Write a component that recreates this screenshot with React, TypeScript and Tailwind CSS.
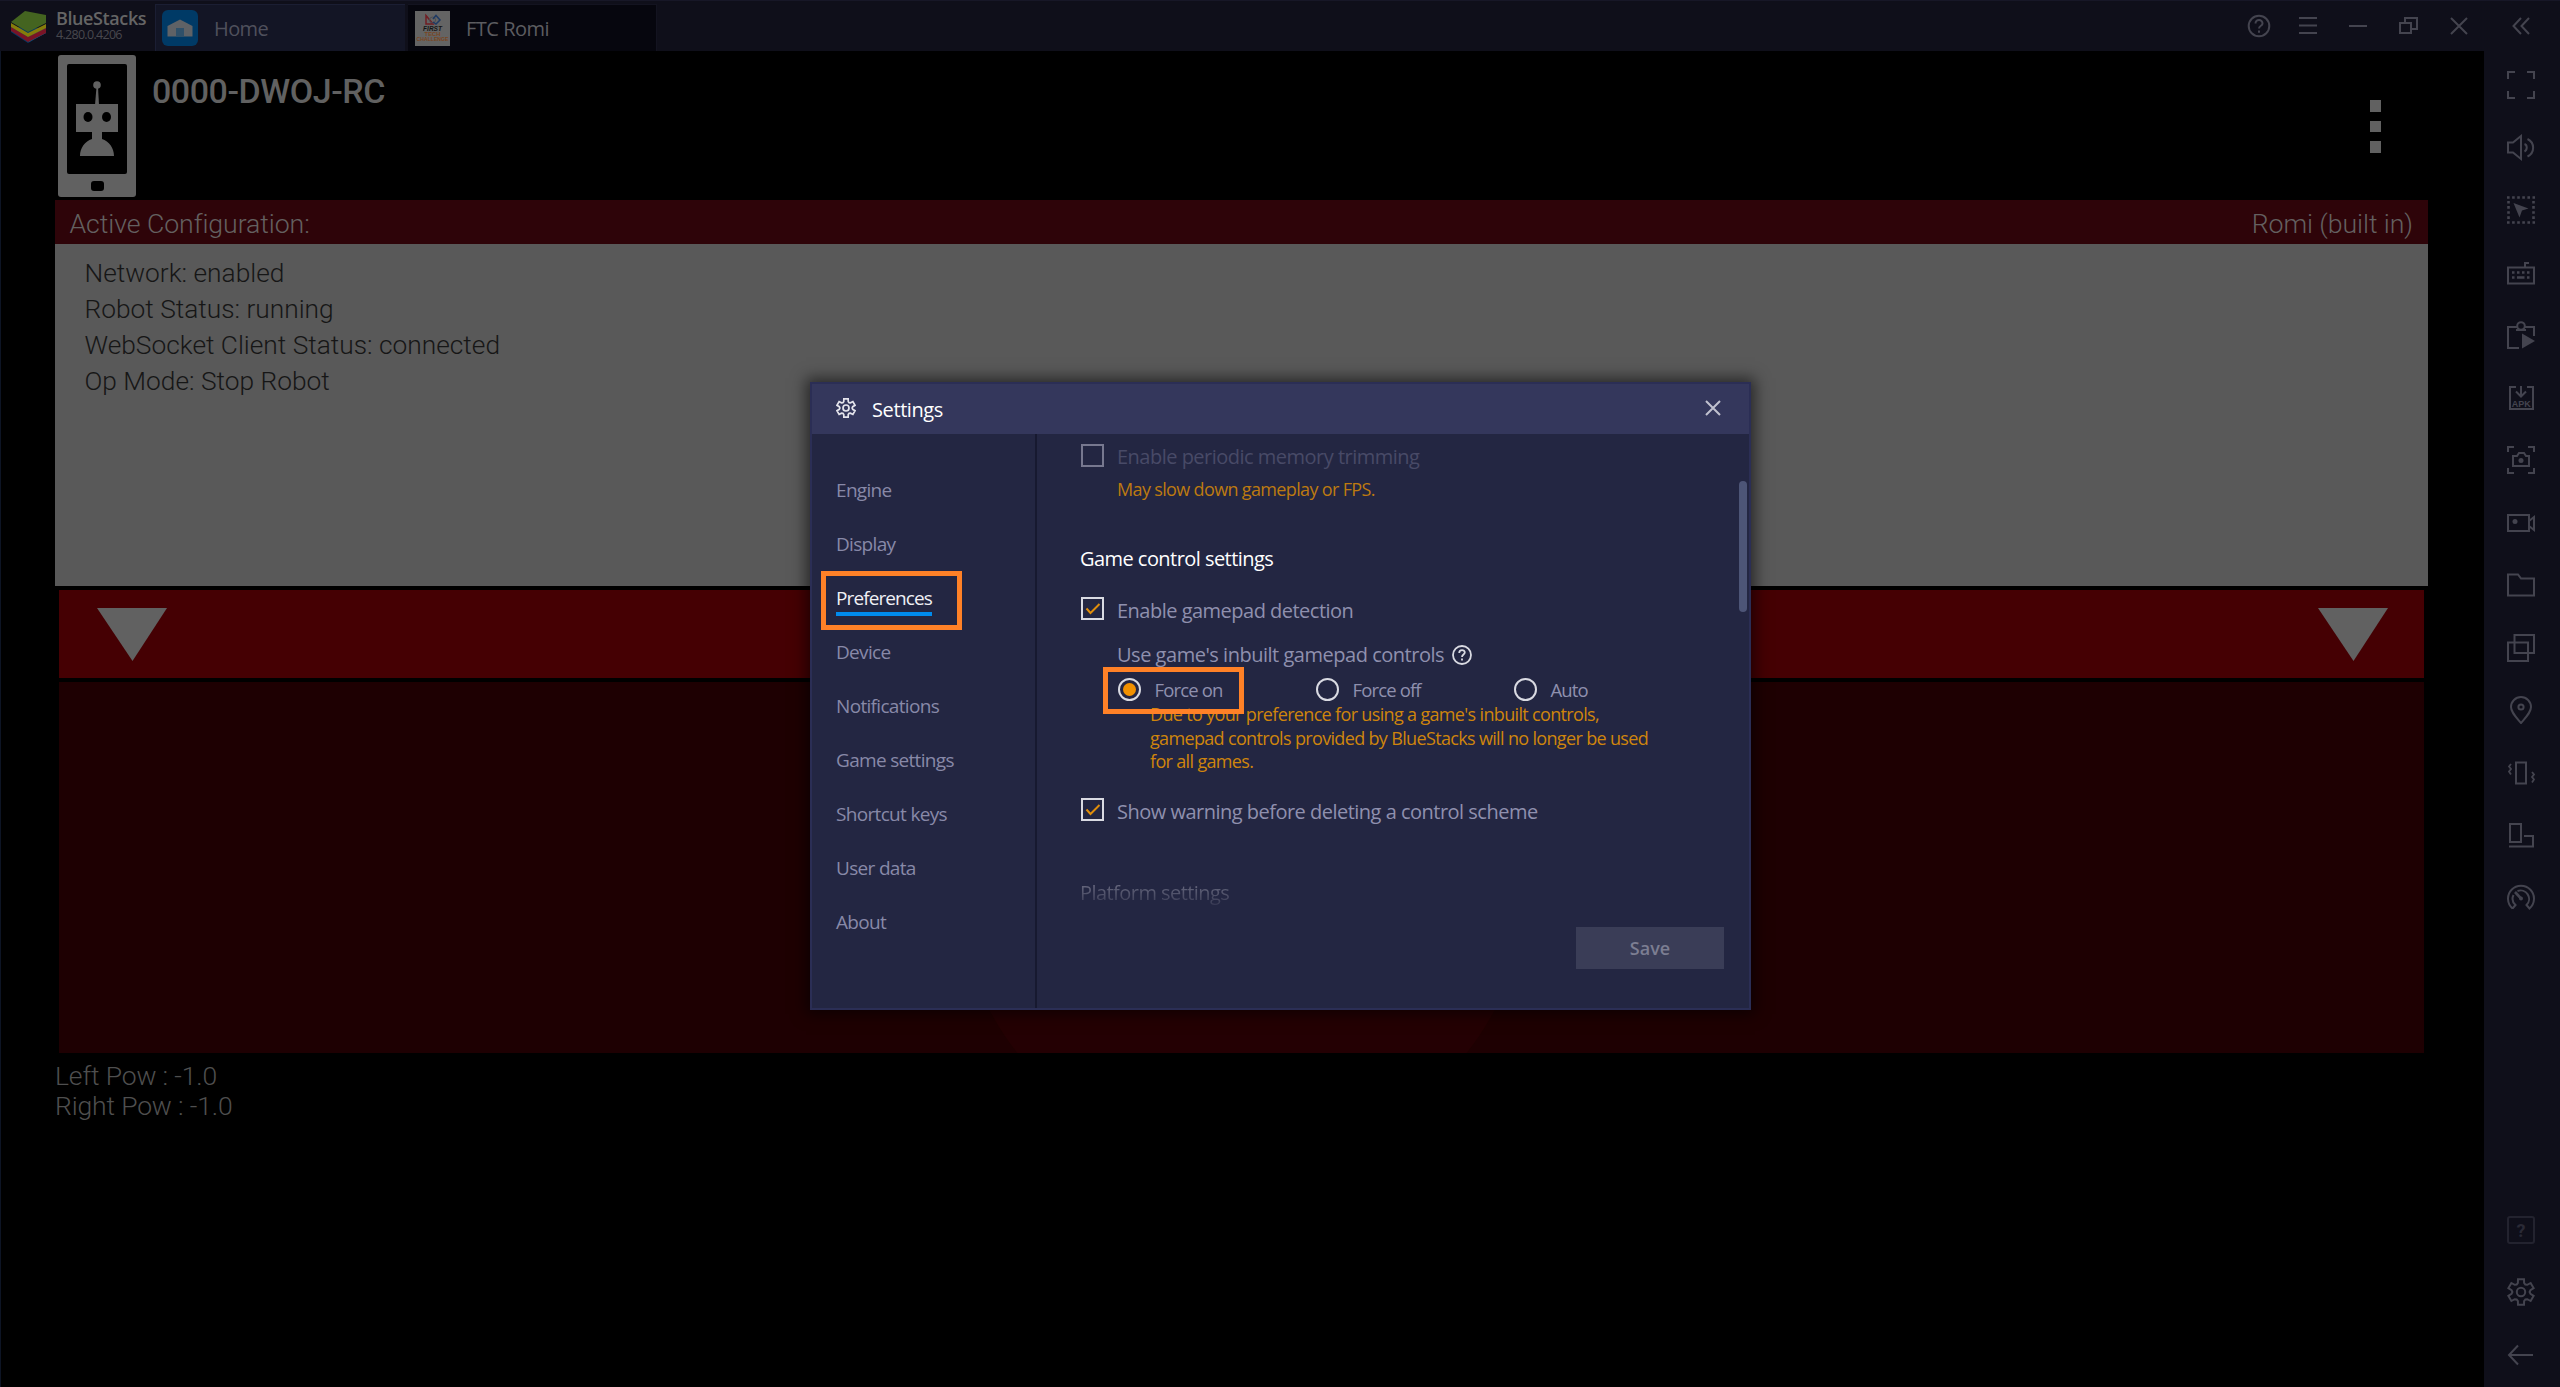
import React from "react";

const UI = "font-['Open_Sans','Noto_Sans',sans-serif]";

function Svg({ w, h, vw, vh, children, className = "" }: { w: number; h: number; vw?: number; vh?: number; children: React.ReactNode; className?: string }) {
  return (
    <svg width={w} height={h} viewBox={`0 0 ${vw ?? w} ${vh ?? h}`} fill="none" stroke="currentColor" strokeWidth={2} className={"block shrink-0 " + className}>
      {children}
    </svg>
  );
}

function Gear({ s, sw = 2 }: { s: number; sw?: number }) {
  const pts: string[] = [];
  for (let i = 0; i < 6; i++) {
    const a = (i * Math.PI) / 3 - Math.PI / 2;
    const p = (r: number, d: number) => `${(14 + r * Math.cos(a + d)).toFixed(2)} ${(14 + r * Math.sin(a + d)).toFixed(2)}`;
    pts.push(p(9.6, -0.33), p(13.2, -0.23), p(13.2, 0.23), p(9.6, 0.33), p(8.6, Math.PI / 6));
  }
  return (
    <Svg w={s} h={s} vw={28} vh={28}>
      <path d={"M" + pts.join("L") + "Z"} strokeWidth={sw} />
      <circle cx="14" cy="14" r="4.2" strokeWidth={sw} />
    </Svg>
  );
}

const sideIcons: React.ReactNode[] = [
  <path d="M1 8V1h7M20 1h7v7M27 20v7h-7M8 27H1v-7" />,
  <>
    <path d="M1 8.500h5L14 2v23l-8-6.500H1z" />
    <path d="M17.500 10c3 1 3 6 0 7.500M20.500 5c7.500 3.500 7.500 14 0 17.500" />
  </>,
  <>
    <path d="M0 1.500h28M0 26.500h28M1.500 5v18M26.500 5v18" strokeWidth="2.600" strokeDasharray="2.600 2.500" />
    <path d="M6.500 7l15 5.500-6.500 2-2.500 7z" fill="currentColor" stroke="none" />
  </>,
  <>
    <path d="M1 8.500h26v16H1zM18 8V4h4" />
    <path d="M5 13.500h2.500m2.500 0h2.500m2.500 0h2.500m2.500 0h2.500M5 18.500h2.500m2.500 0h7.500m2.500 0h2.500" strokeWidth="2.500" />
  </>,
  <>
    <path d="M12 27H1V6h9M18 6h9v9" />
    <circle cx="14" cy="5" r="3.800" />
    <path d="M9 9h10" />
    <path d="M15 12.500l13 7.500-13 7.500z" fill="currentColor" stroke="none" />
  </>,
  <>
    <path d="M9 3H3v22h23V3h-6M14 2v10M9 7.500l5 5 5-5" />
    <text x="14.300" y="22.500" textAnchor="middle" fontSize="9" fontWeight="700" fill="currentColor" stroke="none" fontFamily="Liberation Sans, sans-serif">APK</text>
  </>,
  <>
    <path d="M1 6V1h6M21 1h6v5M27 22v5h-6M7 27H1v-5" />
    <path d="M6 10h4l2-3h5l2 3h3v10H6z" />
    <circle cx="14" cy="14.500" r="2.500" fill="currentColor" stroke="none" />
  </>,
  <>
    <path d="M1 6h21v16H1zM22 12l5-4v13l-5-4" />
    <circle cx="8" cy="12.500" r="2.500" fill="currentColor" stroke="none" />
  </>,
  <path d="M1 3.500h10l3 4h13v17H1z" />,
  <path d="M7.500 1H27v18H7.500zM1 8.500h20V27H1z" />,
  <>
    <path d="M14 27C8 20 4 16 4 11a10 10 0 0 1 20 0c0 5-4 9-10 16z" />
    <circle cx="14" cy="11" r="2.600" />
  </>,
  <>
    <path d="M9 3.500h10v21H9z" />
    <path d="M4 5L2 7.500l2 2.500-2 2.500 2 3M25 13l2 2.500-2 2.500 2 2.500-2 3" strokeWidth="1.800" />
  </>,
  <path d="M3 3h11v18H3zM2 25.500h24V15h-9" />,
  <>
    <path d="M5.500 24.500a13 13 0 1 1 17 0l-3-3.500a8.500 8.500 0 0 0-9-14M5.500 24.500l3-3.500A8.500 8.500 0 0 1 6.500 11" />
    <path d="M8 8l6 6.500" strokeWidth="2.600" />
    <circle cx="14" cy="14.500" r="2" fill="currentColor" stroke="none" />
  </>,
];

function Checkbox({ checked, dim }: { checked?: boolean; dim?: boolean }) {
  return (
    <span className={"flex size-[23px] shrink-0 items-center justify-center border-2 " + (dim ? "border-[#77788f]" : "border-[#d9dae2]")}>
      {checked && (
        <svg width="16" height="12" viewBox="0 0 16 12" fill="none" stroke="#e08e0b" strokeWidth="2">
          <path d="M1.500 5.500l4 4.500L14.500 1" />
        </svg>
      )}
    </span>
  );
}

function CheckRow({ label, checked, dim, className }: { label: string; checked?: boolean; dim?: boolean; className: string }) {
  return (
    <div className={"flex h-[24px] items-center gap-[13px] " + className}>
      <Checkbox checked={checked} dim={dim} />
      <span className={"pt-[4px] text-[20px] leading-[24px] tracking-[-0.510px] " + (dim ? "text-[#484a67]" : "text-[#8f90ae]")}>{label}</span>
    </div>
  );
}

function Radio({ label, on }: { label: string; on?: boolean }) {
  return (
    <div className="flex w-[198px] items-center gap-[14px]">
      <span className="flex size-[23px] shrink-0 items-center justify-center rounded-full border-2 border-[#d9dae2]">
        {on && <span className="size-[13px] rounded-full bg-[#f29100]" />}
      </span>
      <span className="pt-[1px] text-[18.500px] leading-6 tracking-[-0.850px] whitespace-nowrap text-[#8f90ae]">{label}</span>
    </div>
  );
}

const nav = ["Engine", "Display", "Preferences", "Device", "Notifications", "Game settings", "Shortcut keys", "User data", "About"];

function Settings() {
  return (
    <div className={"absolute top-[382px] left-[810px] flex h-[628px] w-[941px] flex-col border-2 border-[#2b2e55] bg-[#232642] shadow-[0_0_14px_4px_rgba(0,0,0,0.55)] " + UI}>
      <div className="flex h-[50px] shrink-0 items-center bg-[#34375c] pr-[28px] pb-[2px] pl-[24px] text-[#e4e4ec]">
        <Gear s={20} sw={2.4} />
        <span className="ml-[16px] grow pt-[4px] text-[20px] tracking-[-0.400px] text-white">Settings</span>
        <Svg w={16} h={16} className="text-[#c0c1cf]">
          <path d="M1 1l14 14M15 1L1 15" />
        </Svg>
      </div>
      <div className="flex grow">
        <div className="flex w-[225px] shrink-0 flex-col border-r-2 border-[#171930] pt-[29.500px] pl-[24px]">
          {nav.map((n) => (
            <div key={n} className="flex h-[54px] items-center">
              <span className={"relative text-[19px] " + (n === "Preferences" ? "tracking-[-0.900px] text-[#f0f0f5]" : "tracking-[-0.680px] text-[#8889a8]")}>
                {n}
                {n === "Preferences" && (
                  <>
                    <span className="absolute inset-x-0 bottom-[-3px] h-[4px] bg-[#008bee]" />
                    <span className="absolute top-[-13px] left-[-15px] h-[59px] w-[141px] border-[5px] border-[#ff8127]" />
                  </>
                )}
              </span>
            </div>
          ))}
        </div>
        <div className="relative flex grow flex-col pl-[44px]">
          <CheckRow className="mt-[9px]" dim label="Enable periodic memory trimming" />
          <div className="mt-[10px] ml-[36px] text-[18px] leading-6 tracking-[-0.650px] text-[#bd7a10]">May slow down gameplay or FPS.</div>
          <div className="mt-[46px] ml-[-1px] text-[20px] leading-6 tracking-[-0.550px] text-white">Game control settings</div>
          <CheckRow className="mt-[25.500px]" checked label="Enable gamepad detection" />
          <div className="mt-[22.500px] ml-[36px] flex h-[24px] items-center gap-[8px] text-[#d9dae2]">
            <span className="text-[20px] tracking-[-0.480px] text-[#8f90ae]">Use game's inbuilt gamepad controls</span>
            <Svg w={20} h={20}>
              <circle cx="10" cy="10" r="9" strokeWidth="1.800" />
              <path d="M7.200 8c0-4 5.800-3.600 5.600-.4 0 2-2.800 2-2.800 4.400M10 13.500v2" strokeWidth="1.800" />
            </Svg>
          </div>
          <div className="relative mt-[10.500px] ml-[36.500px] flex h-[24px]">
            <Radio label="Force on" on />
            <Radio label="Force off" />
            <Radio label="Auto" />
            <span className="absolute top-[-11px] left-[-15px] z-10 h-[47px] w-[141px] border-[5px] border-[#ff8127]" />
          </div>
          <div className="mt-[1.500px] ml-[69px] text-[18px] leading-[23.500px] tracking-[-0.660px] whitespace-nowrap text-[#cf850c]">
            Due to your preference for using a game's inbuilt controls,
            <br />
            gamepad controls provided by BlueStacks will no longer be used
            <br />
            for all games.
          </div>
          <CheckRow className="mt-[24px]" checked label="Show warning before deleting a control scheme" />
          <div className="mt-[59.500px] ml-[-1px] self-start bg-gradient-to-b from-[#6f7085] to-[#383a54] bg-clip-text text-[20px] leading-6 tracking-[-0.550px] text-transparent">Platform settings</div>
          <div className="mt-[22px] mr-[25px] flex h-[42px] w-[148px] items-center justify-center self-end bg-[#3a3d57] text-[18px] font-semibold text-[#7c7e92]">Save</div>
          <span className="absolute top-[47px] right-[2px] h-[131px] w-[8px] rounded-full bg-[#4d5577]" />
        </div>
      </div>
    </div>
  );
}

function BlueStacksLogo() {
  return (
    <svg width="38" height="34" viewBox="0 0 38 34" className="block shrink-0">
      <path d="M1 22l17 11 18-10v-5L1 17z" fill="#043a66" />
      <path d="M19 32l17-9v-5l-17 9z" fill="#0b6186" />
      <path d="M1 17l17 10 18-9v5l-18 9L1 21z" fill="#7a1426" />
      <path d="M1 13l17 10 18-9v4l-18 9L1 17z" fill="#867c0a" />
      <path d="M15 1L36 5v8L18 22 1 12z" fill="#446420" />
    </svg>
  );
}

function RobotPhone() {
  return (
    <svg width="78" height="142" viewBox="0 0 78 142" className="block shrink-0" fill="#616161">
      <rect width="78" height="142" rx="3" />
      <rect x="9" y="9" width="60" height="110" rx="2" fill="#000" />
      <rect x="33" y="126" width="13" height="10" rx="3" fill="#000" />
      <circle cx="39" cy="30" r="3.800" />
      <path d="M38.500 32h1.500l1 18h-4z" />
      <path d="M18 49h42v28H44v7c7 2 12 9 12 17H22c0-8 5-15 12-17v-7H18z" />
      <ellipse cx="30" cy="62" rx="4.500" ry="5" fill="#000" />
      <ellipse cx="48.500" cy="62" rx="4.500" ry="5" fill="#000" />
    </svg>
  );
}

function FirstIcon() {
  return (
    <svg width="35" height="35" viewBox="0 0 35 35" className="block shrink-0">
      <rect width="35" height="35" fill="#646464" />
      <path d="M11 4.500l7 8.500h-7z" fill="none" stroke="#701c22" strokeWidth="1.500" />
      <circle cx="17.500" cy="9" r="3" fill="none" stroke="#4c4c52" />
      <path d="M18 8l3-3.500 4 4.500-4 4-3-2" fill="none" stroke="#1e3a64" strokeWidth="1.500" />
      <text x="17.500" y="19.500" textAnchor="middle" fontSize="6.500" fontWeight="700" fontStyle="italic" fill="#151515" fontFamily="Liberation Sans, sans-serif">FIRST</text>
      <text x="17.500" y="24.800" textAnchor="middle" fontSize="5.800" fontWeight="700" fill="#7a4420" fontFamily="Liberation Sans, sans-serif">TECH</text>
      <text x="17.500" y="30" textAnchor="middle" fontSize="5.800" fontWeight="700" textLength="32" lengthAdjust="spacingAndGlyphs" fill="#7a4420" fontFamily="Liberation Sans, sans-serif">CHALLENGE</text>
    </svg>
  );
}

function TopBar() {
  return (
    <div className={"flex h-[51px] shrink-0 border-t border-[#171727] bg-[#0f0f1a] " + UI}>
      <div className="flex w-[155px] pt-[9px] pl-[10px]">
        <BlueStacksLogo />
        <div className="pl-[8px]">
          <div className="text-[18px] leading-[17px] font-semibold tracking-[-0.400px] text-[#656565]">BlueStacks</div>
          <div className="pt-[1px] text-[12.500px] leading-[14px] tracking-[-0.700px] text-[#48484e]">4.280.0.4206</div>
        </div>
      </div>
      <div className="mt-[3px] flex h-[47px] w-[250px] items-center border-t border-l border-[#1b1e33] bg-[#131525] pl-[6px]">
        <svg width="36" height="36" viewBox="0 0 36 36">
          <rect width="36" height="36" rx="6" fill="#003a66" />
          <path d="M18 9.500L5.500 16v10.500h25V16z" fill="#5f6266" />
          <path d="M14 18h8v8.500h-8z" fill="#2f5069" />
        </svg>
        <span className="pt-[2px] pr-1 pl-[16px] text-[20px] tracking-[-0.600px] text-[#4f505c]">Home</span>
      </div>
      <div className="mt-[3px] ml-[3px] flex h-[47px] w-[249px] items-center border-t border-r border-[#131320] bg-[#06060e] pl-[7px]">
        <FirstIcon />
        <span className="pt-[2px] pl-[16px] text-[20px] tracking-[-0.500px] text-[#5c5c60]">FTC Romi</span>
      </div>
      <div className="flex grow items-center justify-end text-[#44444f]">
        <Svg w={24} h={24} className="mr-[27px]">
          <circle cx="12" cy="12" r="10.300" />
          <path d="M8.500 9.500c0-5 7.200-4.500 7 0 0 2.500-3.500 2-3.500 5M12 16.500v2.200" />
        </Svg>
        <Svg w={20} h={20} className="mr-[31px]">
          <path d="M1 2h18M1 9.500h18M1 17h18" />
        </Svg>
        <Svg w={18} h={20} className="mr-[32px]">
          <path d="M0 10h18" />
        </Svg>
        <Svg w={20} h={20} className="mr-[31px]">
          <path d="M1 7h11v10H1zM6 7V2h12v11h-6" />
        </Svg>
        <Svg w={18} h={18} className="mr-[44px]">
          <path d="M1 1l16 16M17 1L1 17" />
        </Svg>
        <Svg w={18} h={18} className="mr-[30px]">
          <path d="M9 1L1.500 9l7.500 8M17 1L9.500 9l7.500 8" />
        </Svg>
      </div>
    </div>
  );
}

function Triangle() {
  return (
    <svg width="70" height="53" viewBox="0 0 70 53" fill="#616161">
      <path d="M0 0h70L35.500 53z" />
    </svg>
  );
}

export default function App() {
  return (
    <div className="relative flex h-[1387px] w-[2560px] flex-col overflow-hidden bg-black font-[Roboto,sans-serif]">
      <TopBar />
      <div className="flex grow">
        <div className="flex grow flex-col border-l border-[#0d1424] pr-[56px] pl-[54px]">
          <div className="flex h-[149px] shrink-0 pt-[4px] pl-[3px]">
            <RobotPhone />
            <span className="grow pt-[16px] pl-[16px] text-[34px] leading-[40px] font-medium tracking-[-0.450px] text-[#616161]">0000-DWOJ-RC</span>
            <div className="mt-[45px] mr-[47px] flex flex-col gap-[9px]">
              <span className="size-[11.500px] bg-[#616161]" />
              <span className="size-[11.500px] bg-[#616161]" />
              <span className="size-[11.500px] bg-[#616161]" />
            </div>
          </div>
          <div className="flex h-[43.500px] shrink-0 items-center justify-between bg-[#2e0409] pt-[4px] pr-[15px] pl-[14.500px] text-[26.700px] font-light tracking-[-0.080px] text-[#646060]">
            <span>Active Configuration:</span>
            <span>Romi (built in)</span>
          </div>
          <div className="h-[342.500px] shrink-0 bg-[#595959] pt-[11px] pl-[29.500px] text-[26.300px] leading-[36px] font-light text-[#161616]">
            <div>Network: enabled</div>
            <div>Robot Status: running</div>
            <div>WebSocket Client Status: connected</div>
            <div>Op Mode: Stop Robot</div>
          </div>
          <div className="mx-[4px] mt-[4px] flex h-[88px] shrink-0 justify-between bg-[#450003] pt-[18px] pr-[36px] pl-[38px]">
            <Triangle />
            <Triangle />
          </div>
          <div className="mx-[4px] mt-[4px] flex h-[371px] shrink-0 justify-center overflow-hidden bg-[#1e0002]">
            <span className="mt-[-92px] size-[572px] shrink-0 rounded-full bg-[#240003]" />
          </div>
          <div className="pt-[8px] text-[26.500px] leading-[30px] font-light tracking-[-0.150px] text-[#4f4f4f]">
            <div>Left Pow : -1.0</div>
            <div>Right Pow : -1.0</div>
          </div>
        </div>
        <div className="flex w-[76px] shrink-0 flex-col items-center bg-[#0f0f1a] pt-[20px] pr-[2px] text-[#44444f]">
          {sideIcons.map((c, i) => (
            <div key={i} className="flex h-[62.500px] shrink-0 flex-col">
              <Svg w={28} h={28}>{c}</Svg>
            </div>
          ))}
          <div className="mt-auto flex flex-col items-center pb-[18px]">
            <div className="flex size-[28px] items-center justify-center rounded-[3px] border-2 border-[#23232f] text-[18px] font-bold text-[#2a2a36]">?</div>
            <div className="mt-[34px]">
              <Gear s={28} />
            </div>
            <Svg w={28} h={28} className="mt-[35px]">
              <path d="M2 14h24M11 4.500L2 14l9 9.500" />
            </Svg>
          </div>
        </div>
      </div>
      <Settings />
    </div>
  );
}
